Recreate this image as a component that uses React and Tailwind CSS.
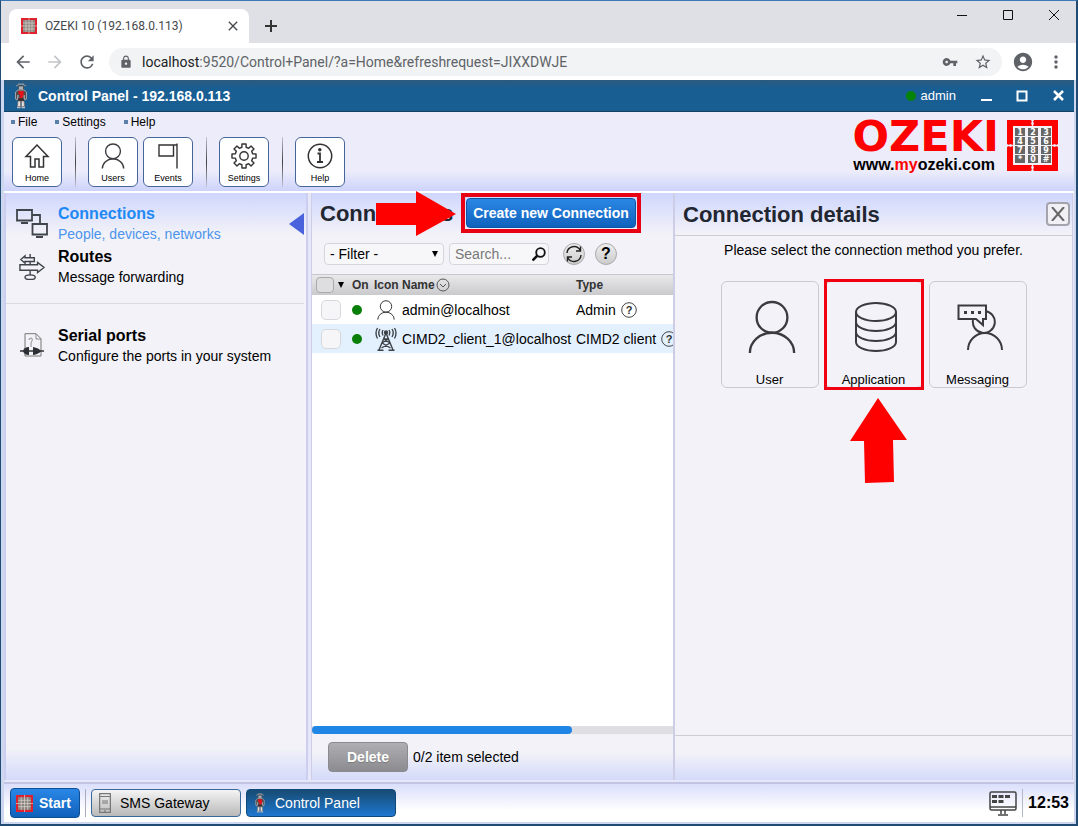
import { useState } from 'react';
import {
	MdAccountCircle,
	MdArrowBack,
	MdArrowForward,
	MdClose,
	MdLock,
	MdMoreVert,
	MdRefresh,
	MdStarBorder,
	MdVpnKey,
} from 'react-icons/md';

const KEYS = ['1', '2', '3', '4', '5', '6', '7', '8', '9', '*', '0', '#'];

function KeypadLogo({ className }) {
	return (
		<svg viewBox="0 0 51 51" className={className} aria-hidden="true">
			<path fill="#f00" d="M0 0h24l1 2-1 1 1 3h1l1-3-1-1 1-2h24v24l-2 1-1-1-3 1v1l3 1 1-1 2 1v24H27l-1-2 1-1-1-3h-1l-1 3 1 1-1 2H0V27l2-1 1 1 3-1v-1l-3-1-1 1-2-1z" />
			<path fill="#f1f1f7" d="M6 6h39v39H6z" />
			{KEYS.map((key, index) => {
				const x = 8 + (index % 3) * 13;
				const y = 8 + Math.floor(index / 3) * 9;
				return (
					<g key={key}>
						<rect x={x} y={y} width="10" height="8" fill="#666" />
						<text x={x + 5} y={y + 7} fontSize="8" fontWeight="bold" textAnchor="middle" fill="#fff" fontFamily="DejaVu Sans">
							{key}
						</text>
					</g>
				);
			})}
		</svg>
	);
}

// simplified grid version for tab and button sizes
function KeypadBadge({ className }) {
	return (
		<svg viewBox="0 0 16 16" className={className} aria-hidden="true">
			<path fill="#e0202c" d="M0 0h16v16H0z" />
			<path fill="#8b8580" d="M2 2h12v12H2z" />
			<path stroke="#d8d0cc" strokeWidth=".7" d="M5 2v12M8 0v16M11 2v12M2 5h12M0 8h16M2 11h12" />
		</svg>
	);
}

function RobotIcon({ className }) {
	return (
		<svg viewBox="0 0 14 26" className={className} aria-hidden="true">
			<path d="M2 3q5-3.500 10 0M4 1.200h6" stroke="#8c9299" strokeWidth="1.200" fill="none" />
			<path d="M4.500 3h5v4h-5z" fill="#aeb2b6" stroke="#444" strokeWidth=".8" />
			<path d="M4 7h6l2.500 2v7l-1.500 1-1-5v5H4v-5l-1 5-1.500-1V9z" fill="#55494a" stroke="#a9adb1" strokeWidth=".9" />
			<path d="M4.500 8h5v5L8 15H5.500l1-3-2-1z" fill="#e8121b" />
			<path d="M4 15.500h6V18H4z" fill="#3a2a2c" />
			<path d="M4 18h2.500v5.500H3.500zM7.500 18H10l.5 5.500h-3z" fill="#e4e4e4" stroke="#7a6a66" strokeWidth=".7" />
			<path d="M3 24.500h3.500M7.500 24.500H11" stroke="#b9bcc0" strokeWidth="1.600" />
		</svg>
	);
}

function HomeIcon({ className }) {
	return (
		<svg viewBox="0 0 26 26" className={className} fill="none" stroke="#333" strokeWidth="1.5" aria-hidden="true">
			<path d="M13 2 2 13.500h4.500V24H11v-8h4v8h4.500V13.500H24z" />
		</svg>
	);
}

function UserIcon({ className, strokeWidth = 1.5 }) {
	return (
		<svg viewBox="0 0 26 28" className={className} fill="none" stroke="#3a3a3f" strokeWidth={strokeWidth} aria-hidden="true">
			<circle cx="13" cy="9" r="8" />
			<path d="M1.500 27.500a11.500 10.500 0 0 1 23 0" />
		</svg>
	);
}

function FlagIcon({ className }) {
	return (
		<svg viewBox="0 0 26 26" className={className} fill="none" stroke="#333" strokeWidth="1.4" aria-hidden="true">
			<path d="M22 .5v25M22 2H4v11h14.500V2" />
		</svg>
	);
}

const GEAR_POINTS = Array.from({ length: 8 }, (_, tooth) => {
	const middle = (tooth * Math.PI) / 4;
	return [
		[-0.24, 9],
		[-0.17, 12.2],
		[0.17, 12.2],
		[0.24, 9],
	]
		.map(([offset, radius]) => {
			const angle = middle + offset;
			return `${(13 + radius * Math.sin(angle)).toFixed(2)},${(13 - radius * Math.cos(angle)).toFixed(2)}`;
		})
		.join(' ');
}).join(' ');

function GearIcon({ className }) {
	return (
		<svg viewBox="0 0 26 26" className={className} fill="none" stroke="#333" strokeWidth="1.4" strokeLinejoin="round" aria-hidden="true">
			<circle cx="13" cy="13" r="4.2" />
			<polygon points={GEAR_POINTS} />
		</svg>
	);
}

function InfoIcon({ className }) {
	return (
		<svg viewBox="0 0 26 26" className={className} fill="none" stroke="#333" strokeWidth="1.5" aria-hidden="true">
			<circle cx="13" cy="13" r="11.7" />
			<path d="M10.500 10.500H13V19M10 19h6" strokeWidth="1.800" />
			<circle cx="12.800" cy="6.800" r="1" fill="#333" />
		</svg>
	);
}

function NetworkIcon({ className }) {
	return (
		<svg viewBox="0 0 32 30" className={className} fill="none" stroke="#40454b" strokeWidth="1.8" aria-hidden="true">
			<path d="M1 1h15v10.500H1zM16.500 15h14.500v10.500H16.500zM16.500 6H24v8" />
			<path d="M5 14h7M20 28h7" strokeWidth="2" />
		</svg>
	);
}

function SignpostIcon({ className }) {
	return (
		<svg viewBox="0 0 28 28" className={className} fill="none" stroke="#40454b" strokeWidth="1.5" aria-hidden="true">
			<path d="M12 0v4M12 8v3M12 18v5" />
			<path d="M16.500 4H6.500V2L2 6l4.500 4V8h10zM1 11.500h19V9l7 5.500-7 5.500v-2.500H1z" />
			<ellipse cx="12" cy="25" rx="5.500" ry="2.500" />
		</svg>
	);
}

function SerialIcon({ className }) {
	return (
		<svg viewBox="0 0 24 24" className={className} fill="none" aria-hidden="true">
			<path d="M5 .7h11l5 5V23H5z" stroke="#777" />
			<path d="M16 .7V6h5M9 7q0-2 2-2t1 3l-1 2v4" stroke="#777" strokeWidth=".8" />
			<path d="M0 18h24" stroke="#333" strokeWidth="1.500" />
			<path d="M3 18q1-4 6-4v8q-5 0-6-4zM13 14q6 1 8 4-2 3-8 4z" fill="#2c2f33" />
		</svg>
	);
}

function TowerIcon({ className }) {
	return (
		<svg viewBox="0 0 22 24" className={className} fill="none" stroke="#3c4248" strokeWidth="1.4" aria-hidden="true">
			<path d="M11 6 4 23M11 6l7 17M8.500 12h5M7 16l8.500 5M15 16l-8.500 5M8.500 12l6.500 4M13.500 12 7 16M2.500 23.300h6M13.500 23.300h6" />
			<path d="M8 3q-1.500 2.500 0 5.500M14 3q1.500 2.500 0 5.500M5 2q-2.500 4 0 8M17 2q2.500 4 0 8M2.500 1q-3 5 0 10.500M19.500 1q3 5 0 10.500" />
			<circle cx="11" cy="5.500" r="1.500" fill="#3c4248" />
		</svg>
	);
}

function DatabaseIcon({ className }) {
	return (
		<svg viewBox="0 0 42 50" className={className} fill="none" stroke="#3a3a3f" strokeWidth="2" aria-hidden="true">
			<ellipse cx="21" cy="10" rx="20" ry="9" />
			<path d="M1 10v30c0 5 9 9 20 9s20-4 20-9V10M1 20c0 5 9 9 20 9s20-4 20-9M1 30c0 5 9 9 20 9s20-4 20-9" />
		</svg>
	);
}

function MessagingIcon({ className }) {
	return (
		<svg viewBox="0 0 46 46" className={className} fill="none" stroke="#3a3a3f" strokeWidth="2" aria-hidden="true">
			<path d="M28 7a11 11 0 1 1-12 9M11 46a17 17 0 0 1 34 0" />
			<path d="M1.500 1.500H29V15h-3v6l-7-6H1.500z" fill="#f2f2f7" />
			<path d="M7 7h3v3H7zM14 7h3v3h-3zM21 7h3v3h-3z" fill="#3a3a3f" stroke="none" />
		</svg>
	);
}

function HelpMark({ className }) {
	return (
		<svg viewBox="0 0 16 16" className={className} aria-hidden="true">
			<circle cx="8" cy="8" r="7.300" fill="none" stroke="#444" />
			<text x="8" y="12" fontSize="11" fontWeight="bold" textAnchor="middle" fill="#333" fontFamily="Liberation Sans">?</text>
		</svg>
	);
}

const MENU = ['File', 'Settings', 'Help'];

const TOOLBAR = [
	[{ label: 'Home', Icon: HomeIcon }],
	[{ label: 'Users', Icon: UserIcon }, { label: 'Events', Icon: FlagIcon }],
	[{ label: 'Settings', Icon: GearIcon }],
	[{ label: 'Help', Icon: InfoIcon }],
];

const CONNECTIONS = [
	{ name: 'admin@localhost', type: 'Admin', Icon: UserIcon, size: 'h-5 w-6' },
	{ name: 'CIMD2_client_1@localhost', type: 'CIMD2 client', Icon: TowerIcon, size: 'h-6 w-6', shaded: true },
];

const METHODS = [
	{ label: 'User', Icon: UserIcon, size: 'h-[54px] w-[50px] mt-[18px] ml-1' },
	{ label: 'Application', Icon: DatabaseIcon, size: 'h-[50px] w-[44px] mt-5 ml-1', marked: true },
	{ label: 'Messaging', Icon: MessagingIcon, size: 'h-[46px] w-[46px] mt-[22px] ml-1' },
];

function BrowserChrome() {
	return (
		<header className="font-[Roboto,sans-serif]">
			<div className="flex h-[42px] items-end bg-[#dfdfe6] pl-2">
				<div className="flex h-[34px] w-60 items-center rounded-t-lg bg-white pr-2 pl-3 text-[#45484c]">
					<KeypadBadge className="size-4" />
					<span className="ml-2 flex-1 text-xs">OZEKI 10 (192.168.0.113)</span>
					<button type="button" aria-label="Close tab"><MdClose className="size-4" /></button>
				</div>
				<button type="button" aria-label="New tab" className="mb-2.5 ml-[15px]">
					<svg viewBox="0 0 14 14" className="size-3.5" stroke="#333" strokeWidth="2"><path d="M7 1v12M1 7h12" /></svg>
				</button>
				<div className="mr-[17px] mb-[23px] ml-auto flex gap-9">
					<button type="button" aria-label="Minimize">
						<svg viewBox="0 0 10 10" className="size-2.5" stroke="#111"><path d="M0 5.500h10" /></svg>
					</button>
					<button type="button" aria-label="Maximize">
						<svg viewBox="0 0 10 10" className="size-2.5" fill="none" stroke="#111"><path d="M.5.5h9v9h-9z" /></svg>
					</button>
					<button type="button" aria-label="Close">
						<svg viewBox="0 0 10 10" className="size-2.5" stroke="#111"><path d="m0 0 10 10M10 0 0 10" /></svg>
					</button>
				</div>
			</div>
			<div className="flex h-[37px] items-center bg-white pl-3 text-[#5f6368]">
				<button type="button" aria-label="Back"><MdArrowBack className="size-5" /></button>
				<button type="button" aria-label="Forward" className="ml-3 text-[#c3c5c8]"><MdArrowForward className="size-5" /></button>
				<button type="button" aria-label="Reload" className="ml-3"><MdRefresh className="size-5" /></button>
				<div className="ml-3 flex h-7 flex-1 items-center rounded-full bg-[#f1f3f4] pr-2.5 pl-2.5">
					<MdLock className="size-3.5" />
					<span className="ml-[9px] flex-1 text-sm">
						<span className="text-[#202124]">localhost</span>:9520/Control+Panel/?a=Home&amp;refreshrequest=JIXXDWJE
					</span>
					<MdVpnKey className="size-4" />
					<MdStarBorder className="ml-4 size-[18px]" />
				</div>
				<MdAccountCircle className="ml-2.5 size-[22px]" />
				<button type="button" aria-label="Browser menu" className="mr-2.5 ml-3"><MdMoreVert className="size-5" /></button>
			</div>
		</header>
	);
}

function TitleBar() {
	return (
		<div className="flex h-8 items-center border-b border-[#16405f] bg-linear-to-b from-[#2b5b7d] to-[#195e93] to-25% pr-2.5 text-white">
			<RobotIcon className="ml-2.5 h-[26px] w-3.5" />
			<h1 className="ml-2.5 flex-1 text-sm font-bold">Control Panel - 192.168.0.113</h1>
			<span className="size-2.5 rounded-full bg-[#078407]" />
			<span className="ml-[5px] text-[13px]">admin</span>
			<button type="button" aria-label="Minimize panel" className="ml-6">
				<svg viewBox="0 0 12 12" className="size-3" stroke="#fff" strokeWidth="2"><path d="M1 10h11" /></svg>
			</button>
			<button type="button" aria-label="Maximize panel" className="ml-6">
				<svg viewBox="0 0 12 12" className="size-3" fill="none" stroke="#fff" strokeWidth="2"><path d="M1.500 1.500h9v9h-9z" /></svg>
			</button>
			<button type="button" aria-label="Close panel" className="ml-6">
				<svg viewBox="0 0 12 12" className="size-3" stroke="#fff" strokeWidth="2.500"><path d="m2 1 9 9M11 1 2 10" /></svg>
			</button>
		</div>
	);
}

function Toolbar() {
	return (
		<div className="flex h-[81px] justify-between border-b-2 border-white bg-linear-to-b from-[#ececfb] from-75% to-[#cdd3fb]">
			<div>
				<nav className="flex gap-[18px] pt-0.5 pl-[7px] text-xs">
					{MENU.map((item) => (
						<button key={item} type="button" className="flex items-center gap-[3px]">
							<span className="size-1 bg-[#5a7fa8]" />
							{item}
						</button>
					))}
				</nav>
				<div className="mt-[7px] flex pl-2">
					{TOOLBAR.map((group, index) => (
						<div key={group[0].label} className="flex gap-[5px]">
							{index > 0 ? <span className="mr-[7px] ml-[13px] h-[50px] w-px bg-linear-to-b from-[#c5c5d8] via-[#444] to-[#c5c5d8]" /> : null}
							{group.map(({ label, Icon }) => (
								<button
									key={label}
									type="button"
									className="flex size-[50px] flex-col items-center rounded-md border border-[#46669a] bg-white pt-[5px] text-[9px] leading-[10px]"
								>
									<Icon className="mb-1 size-[26px]" />
									{label}
								</button>
							))}
						</div>
					))}
				</div>
			</div>
			<div className="flex pt-2 pr-4">
				<div className="text-right">
					<div className="font-['DejaVu_Sans',sans-serif] text-[43px] leading-8 font-bold text-[#f00]">OZEKI</div>
					<div className="mt-[3px] pr-1 text-base leading-5 font-bold">
						www.<span className="text-[#f00]">my</span>ozeki.com
					</div>
				</div>
				<KeypadLogo className="ml-2 size-[51px]" />
			</div>
		</div>
	);
}

function SideItem({ Icon, iconSize, title, text, active = false }) {
	return (
		<li className="relative">
			<a href="#" className="flex h-[43px] items-start pl-2">
				<span className="flex w-9 justify-center"><Icon className={iconSize} /></span>
				<span className={active ? 'ml-2 text-[#4c94ec]' : 'ml-2'}>
					<span className={active ? 'block text-base leading-5 font-bold text-[#1e88f5]' : 'block text-base leading-5 font-bold'}>{title}</span>
					<span className="block text-sm leading-5">{text}</span>
				</span>
			</a>
			{active ? (
				<svg viewBox="0 0 15 22" className="absolute top-[9px] right-0 h-[22px] w-[15px]" fill="#4a63dc" aria-hidden="true"><path d="M15 0v22L0 11z" /></svg>
			) : null}
		</li>
	);
}

function Sidebar() {
	return (
		<aside className="w-[304px] shrink-0 border-x-2 border-[#cdcdf0] bg-[#f2f2f8] bg-linear-to-b from-[#cfd6fd] via-[#f2f2f8] via-7% to-[#f2f2f8]">
			<div className="flex h-full flex-col">
				<ul className="mr-0.5 border-b border-[#d8dbe2] pt-[11px] pb-[13px]">
					<SideItem Icon={NetworkIcon} iconSize="mt-[5px] h-[30px] w-8" title="Connections" text="People, devices, networks" active />
					<SideItem Icon={SignpostIcon} iconSize="mt-[7px] size-[26px]" title="Routes" text="Message forwarding" />
				</ul>
				<ul className="flex-1 pt-[22px]">
					<SideItem Icon={SerialIcon} iconSize="mt-[7px] size-6" title="Serial ports" text="Configure the ports in your system" />
				</ul>
				<div className="h-8 bg-linear-to-b from-[#f2f2f8] to-[#d4dafa]" />
			</div>
		</aside>
	);
}

function ConnectionTable({ selected, onToggle }) {
	return (
		<table className="w-[384px] table-fixed text-left text-sm">
			<colgroup>
				<col className="w-10" />
				<col className="w-[22px]" />
				<col className="w-7" />
				<col className="w-[174px]" />
				<col />
			</colgroup>
			<thead className="text-xs">
				<tr className="h-5 bg-linear-to-b from-[#e9e9ec] to-[#cacacd] text-[#333]">
					<th>
						<span className="flex items-center gap-1 pl-1">
							<input type="checkbox" aria-label="Select all" className="h-4 w-[18px] appearance-none rounded border border-[#aaa] bg-[#dedee0] checked:bg-[#1f7fe0]" />
							<svg viewBox="0 0 6 6" className="size-1.5" aria-hidden="true"><path d="M0 0h6L3 6z" /></svg>
						</span>
					</th>
					<th>On</th>
					<th>Icon</th>
					<th>
						<span className="flex items-center gap-px">
							Name
							<svg viewBox="0 0 14 14" className="size-3.5" fill="none" stroke="#555" aria-hidden="true"><circle cx="7" cy="7" r="6" /><path d="m4 6 3 3 3-3" /></svg>
						</span>
					</th>
					<th>Type</th>
				</tr>
			</thead>
			<tbody>
				{CONNECTIONS.map(({ name, type, Icon, size, shaded }) => (
					<tr key={name} className={shaded ? 'h-[29px] bg-[#e3f1fe]' : 'h-[29px] bg-white'}>
						<td>
							<input
								type="checkbox"
								aria-label={`Select ${name}`}
								checked={selected.includes(name)}
								onChange={() => onToggle(name)}
								className="ml-[9px] block size-5 appearance-none rounded-[5px] border border-[#d8d8dc] bg-[#f6f6f8] checked:bg-[#1f7fe0]"
							/>
						</td>
						<td><span className="block size-2.5 rounded-full bg-[#087f08]" /></td>
						<td><Icon className={size} strokeWidth={1.4} /></td>
						<td>{name}</td>
						<td><span className="flex items-center gap-[5px] whitespace-nowrap">{type}<HelpMark className="size-4 shrink-0" /></span></td>
					</tr>
				))}
			</tbody>
		</table>
	);
}

function ConnectionsPanel() {
	const [selected, setSelected] = useState([]);
	const [search, setSearch] = useState('');

	function toggle(name) {
		setSelected((current) => (current.includes(name) ? current.filter((item) => item !== name) : [...current, name]));
	}

	return (
		<section className="flex w-[363px] shrink-0 flex-col border-x border-[#cdcde6] bg-linear-to-b from-[#cfd6fd] via-[#f2f2f8] via-7% to-[#f2f2f8]">
			<div className="relative flex h-10 items-center">
				<h2 className="ml-2 w-[134px] text-[22px] font-bold text-[#222631]">Connections</h2>
				<svg viewBox="0 0 80 46" className="absolute top-[-2px] left-16 h-[46px] w-20" fill="#f00" aria-hidden="true">
					<path d="M0 12h40V0l40 23-40 22V34H0z" />
				</svg>
				<div className="ml-[7px] border-4 border-[#e80014] p-px">
					<button
						type="button"
						className="block h-[30px] w-[170px] rounded border border-[#0d55a5] bg-linear-to-b from-[#2a87e6] to-[#0f62bc] text-sm font-bold whitespace-nowrap text-white"
					>
						Create new Connection
					</button>
				</div>
			</div>
			<div className="flex items-center pt-2.5 pb-[9px] pl-3">
				<div className="relative">
					<select aria-label="Filter" className="block h-[22px] w-[120px] appearance-none rounded border border-[#d5d5dc] bg-[#f7f7fa] pl-[5px] text-sm leading-5">
						<option>- Filter -</option>
					</select>
					<svg viewBox="0 0 6 6" className="pointer-events-none absolute top-2 right-1.5 size-1.5" aria-hidden="true"><path d="M0 0h6L3 6z" /></svg>
				</div>
				<div className="relative ml-[5px]">
					<input
						type="text"
						aria-label="Search"
						value={search}
						onChange={(event) => setSearch(event.target.value)}
						placeholder="Search..."
						className="block h-[22px] w-[100px] rounded border border-[#d5d5dc] bg-[#f7f7fa] pl-[5px] text-sm placeholder:text-[#777]"
					/>
					<svg viewBox="0 0 14 14" className="pointer-events-none absolute top-1 right-[3px] size-3.5" fill="none" stroke="#111" strokeWidth="1.800" aria-hidden="true">
						<circle cx="8.500" cy="5.500" r="4.300" /><path d="m5.500 8.500-5 5" strokeWidth="2.500" />
					</svg>
				</div>
				<button type="button" aria-label="Refresh" className="ml-3.5 flex size-[22px] items-center justify-center rounded-full border border-[#aaa] bg-linear-to-b from-[#eee] to-[#ccc]">
					<svg viewBox="0 0 18 18" className="size-[18px]" fill="none" stroke="#222" strokeWidth="1.400" aria-hidden="true">
						<path d="M2 8a7 7 0 0 1 13-3M15.500 1.500V6h-4.500M16 10a7 7 0 0 1-13 3M2.500 16.500V12H7" />
					</svg>
				</button>
				<button type="button" className="ml-2.5 size-[22px] rounded-full border border-[#aaa] bg-linear-to-b from-[#eee] to-[#ccc] text-base leading-5 font-bold">?</button>
			</div>
			<div className="flex-1 overflow-hidden border-t border-[#c9c9cc] bg-white">
				<ConnectionTable selected={selected} onToggle={toggle} />
			</div>
			<div className="h-2 bg-[#dfdfe3]"><div className="h-2 w-[260px] rounded-full bg-[#2086e6]" /></div>
			<div className="flex h-[46px] items-center bg-linear-to-b from-[#f2f2f8] from-40% to-[#d4dafa] pl-4">
				<button type="button" className="h-[30px] w-20 rounded border border-[#8a8a90] bg-linear-to-b from-[#afafb3] to-[#8c8c90] text-sm font-bold text-white text-shadow-xs">Delete</button>
				<span className="ml-[5px] text-sm">{selected.length}/{CONNECTIONS.length} item selected</span>
			</div>
		</section>
	);
}

function DetailsPanel() {
	return (
		<section className="flex min-w-0 flex-1 flex-col border-x border-[#cdcde6] bg-linear-to-b from-[#cfd6fd] via-[#f2f2f8] via-7% to-[#f2f2f8]">
			<div className="flex h-[43px] items-center justify-between border-b border-[#ccccd2] pr-0.5 pl-2">
				<h2 className="text-[22px] font-bold text-[#222631]">Connection details</h2>
				<button type="button" aria-label="Close details" className="flex size-6 items-center justify-center rounded-sm border-2 border-[#a4a4ac] bg-[#f0f0f5]">
					<svg viewBox="0 0 14 14" className="size-3.5" stroke="#666" strokeWidth="2"><path d="m1 0 12 14M13 0 1 14" /></svg>
				</button>
			</div>
			<p className="pt-1 text-center text-sm">Please select the connection method you prefer.</p>
			<div className="mt-[21px] flex justify-center gap-1.5">
				{METHODS.map(({ label, Icon, size, marked }) => (
					<div key={label} className="relative">
						<button type="button" className="flex h-[107px] w-[98px] flex-col items-center justify-between rounded-md border border-[#cacace] bg-[#f2f2f8] text-[13px] leading-[14px]">
							<Icon className={size} strokeWidth={1.2} />
							{label}
						</button>
						{marked ? (
							<>
								<span className="pointer-events-none absolute -inset-x-px -top-0.5 -bottom-0.5 border-3 border-[#f00010]" />
								<svg viewBox="0 0 57 85" className="absolute top-[117px] left-[25px] h-[85px] w-[57px]" fill="#f00" aria-hidden="true">
									<path d="m28 0 29 42H43l1 42-29 1-1-42H0z" />
								</svg>
							</>
						) : null}
					</div>
				))}
			</div>
			<div className="mt-auto h-[45px] border-t border-[#ccccd2] bg-linear-to-b from-[#f2f2f8] from-40% to-[#d4dafa]" />
		</section>
	);
}

function Taskbar() {
	return (
		<footer className="flex h-10 items-center border-t-2 border-[#c3c3e4] bg-linear-to-b from-[#dbdffb] to-white to-70% pr-[5px] pl-1.5">
			<button type="button" className="flex h-[30px] w-[70px] items-center gap-1.5 rounded border border-[#0d4f94] bg-linear-to-b from-[#2a87e6] to-[#0f62bc] pl-[5px] text-sm font-bold text-white">
				<KeypadBadge className="size-[17px]" />
				Start
			</button>
			<span className="mx-[5px] h-7 w-px bg-[#a8adbd]" />
			<button type="button" className="flex h-7 w-[150px] items-center rounded border border-[#39699b] bg-linear-to-b from-[#f4f4f4] to-[#b9b9b9] pl-[7px] text-sm">
				<svg viewBox="0 0 12 20" className="mr-[9px] h-5 w-3" fill="none" stroke="#777" aria-hidden="true">
					<rect x=".5" y=".5" width="11" height="19" rx="1" strokeWidth="1.500" /><path d="M1 3.500h10M1 16h10M3 8h6M3 10h6" /><circle cx="6" cy="18" r=".5" />
				</svg>
				SMS Gateway
			</button>
			<button type="button" className="ml-[5px] flex h-7 w-[150px] items-center rounded border border-[#0f4979] bg-linear-to-b from-[#174b73] to-[#1e77d0] pl-[7px] text-sm text-white">
				<RobotIcon className="mr-[9px] h-5 w-3" />
				Control Panel
			</button>
			<svg viewBox="0 0 28 25" className="ml-auto h-[25px] w-7" fill="none" stroke="#444" strokeWidth="1.500" aria-hidden="true">
				<rect x="1" y="1" width="26" height="18" rx="1.500" /><path d="M1 16h26M9 24h10M12 19v4M16 19v4" />
				<path d="M3 4h5v3H3zM9.500 4h5v3h-5zM16 4h5v3h-5zM3 9h5v3H3zM9.500 9h5v3h-5z" fill="#444" stroke="none" />
			</svg>
			<span className="mr-[5px] ml-[5px] h-7 w-px bg-[#b4b8c8]" />
			<time className="text-base font-bold">12:53</time>
		</footer>
	);
}

export default function App() {
	return (
		<div className="flex h-screen flex-col border border-t-[#3b78b5] border-r-2 border-b-2 border-[#214b73] bg-white font-['Liberation_Sans',Arial,sans-serif] text-black">
			<BrowserChrome />
			<div className="flex min-h-0 flex-1 flex-col border-r-2 border-b-2 border-l-3 border-[#cdd8f0]">
				<TitleBar />
				<Toolbar />
				<main className="flex min-h-0 flex-1 gap-[3px] bg-[#e6e8fa] pr-px pb-0.5">
					<Sidebar />
					<div className="flex min-w-0 flex-1">
						<ConnectionsPanel />
						<DetailsPanel />
					</div>
				</main>
				<Taskbar />
			</div>
		</div>
	);
}
